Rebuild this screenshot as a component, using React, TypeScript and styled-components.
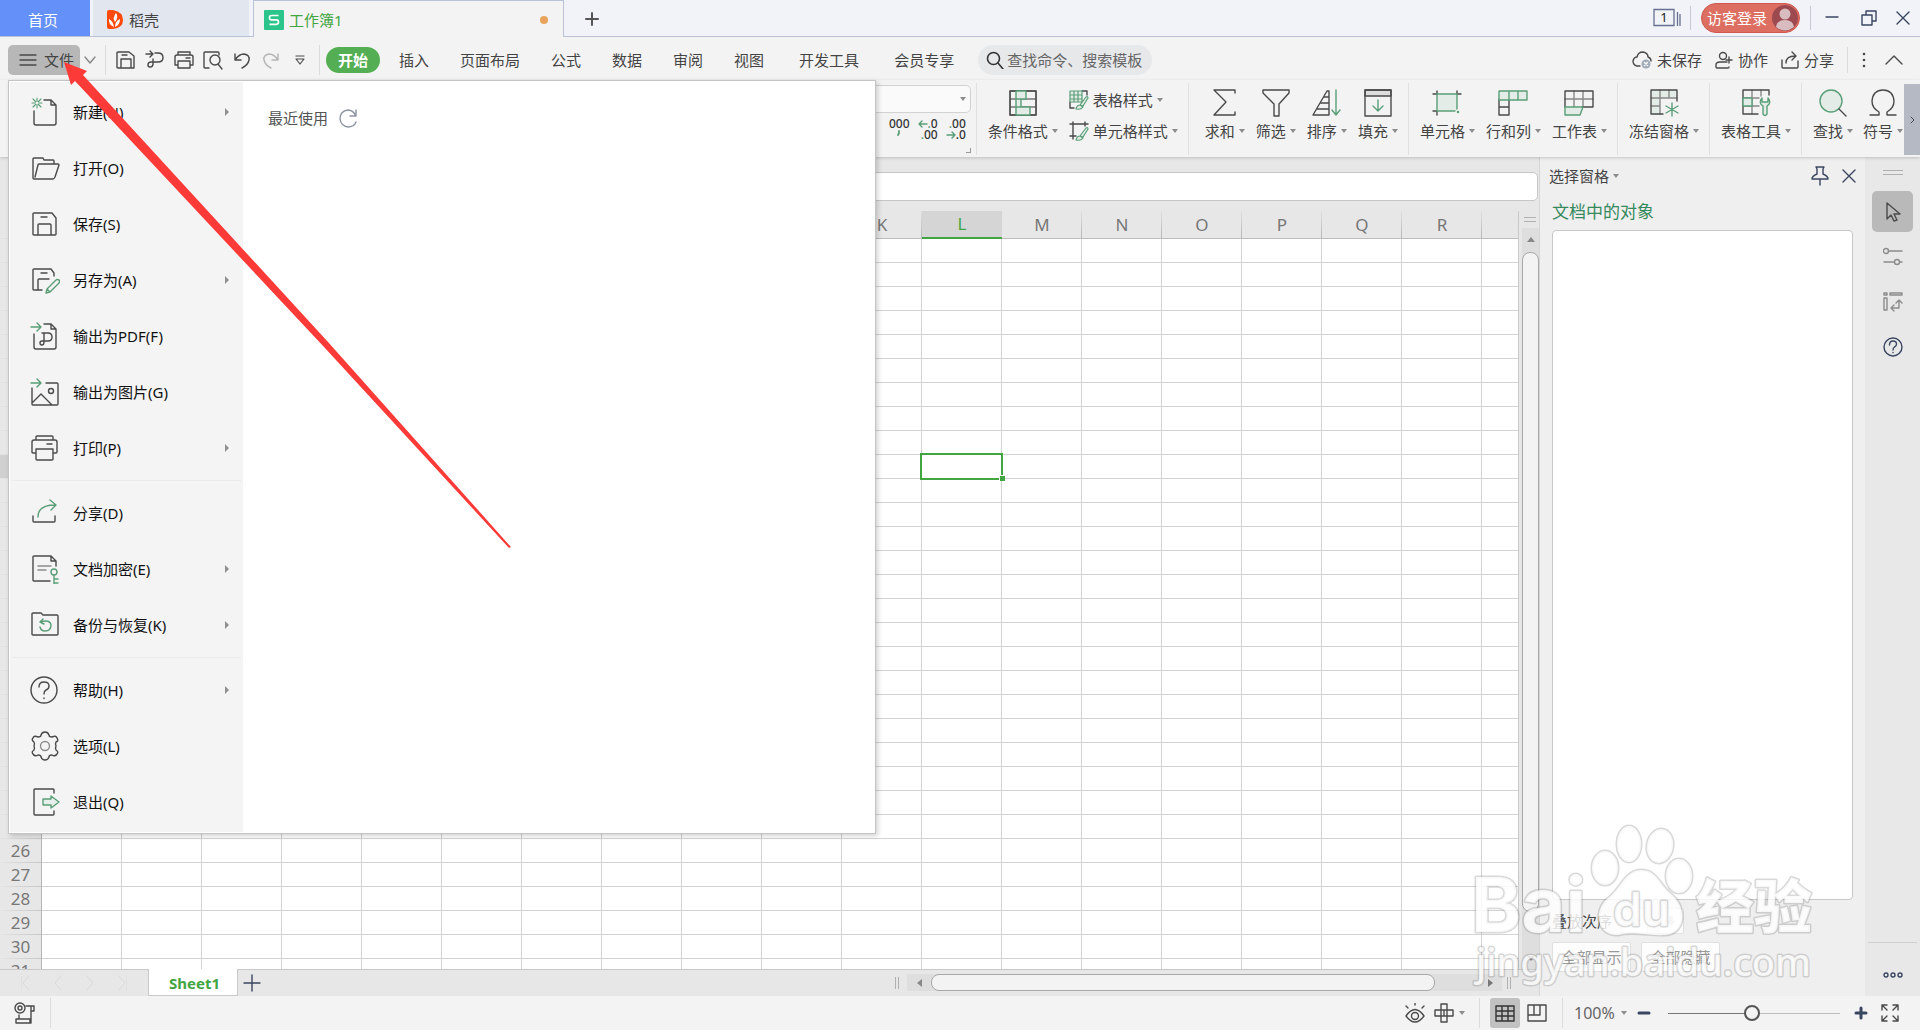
import React from "react";
import styled, { createGlobalStyle, css } from "styled-components";

const INK = "#4a4a4a";
const GREEN = "#5a9e78";
const NAVY = "#3a4560";
const TINT = "#e3ece6";

const Global = createGlobalStyle`
  *, *::before, *::after { box-sizing: border-box; }
  html, body, #root { height: 100%; }
  body {
    margin: 0;
    overflow: hidden;
    font-family: "Noto Sans", "Noto Sans CJK SC", sans-serif;
    font-size: 15px;
    line-height: 20px;
    color: #444;
    background: #f3f3f3;
  }
  button, input, select {
    font: inherit;
    color: inherit;
    background: none;
    border: 0;
    margin: 0;
    padding: 0;
  }
  button { cursor: pointer; white-space: nowrap; }
  svg { display: block; flex: none; }
`;

/* ---------- shared pieces ---------- */

type IconProps = {
  w: number;
  h?: number;
  color?: string;
  sw?: number;
  children: React.ReactNode;
};

const Icon = ({ w, h = w, color = INK, sw = 1.4, children }: IconProps) => (
  <svg
    width={w}
    height={h}
    viewBox={`0 0 ${w} ${h}`}
    fill="none"
    stroke={color}
    strokeWidth={sw}
    strokeLinecap="round"
    strokeLinejoin="round"
    aria-hidden="true"
  >
    {children}
  </svg>
);

const Caret = styled.span`
  flex: none;
  width: 0;
  height: 0;
  border: 3px solid transparent;
  border-top: 4px solid #8c8c8c;
  border-bottom: 0;
`;

const Divider = styled.span<{ $h: number; $color?: string }>`
  flex: none;
  width: 1px;
  height: ${(p) => p.$h}px;
  background: ${(p) => p.$color || "#dcdcdc"};
`;

const IconButton = styled.button<{ $w: number; $h?: number }>`
  flex: none;
  display: flex;
  align-items: center;
  justify-content: center;
  width: ${(p) => p.$w}px;
  height: ${(p) => p.$h || 28}px;
`;

const Window = styled.div`
  position: relative;
  display: flex;
  flex-direction: column;
  height: 100vh;
  overflow: hidden;
`;

/* ---------- title bar ---------- */

const TitleBar = styled.header`
  flex: none;
  display: flex;
  height: 37px;
  background: linear-gradient(#b9c2d6, #b9c2d6) bottom / 100% 1px no-repeat #f1f3f8;
`;

const DocTab = styled.button<{ $kind: "home" | "plain" | "active" }>`
  display: flex;
  align-items: center;
  gap: 6px;
  padding: 3px 12px 0 14px;
  ${(p) =>
    p.$kind === "home" &&
    css`
      width: 90px;
      height: 36px;
      justify-content: center;
      padding: 3px 4px 0 0;
      color: #fff;
      background: #6490fa;
    `}
  ${(p) =>
    p.$kind === "plain" &&
    css`
      width: 156px;
      height: 36px;
      margin: 0 4px 0 3px;
      background: #e1e6ef;
    `}
  ${(p) =>
    p.$kind === "active" &&
    css`
      gap: 5px;
      width: 311px;
      height: 37px;
      padding: 2px 12px 0 10px;
      color: #41a541;
      background: #f3f3f3;
      border: 1px solid #b9c2d6;
      border-bottom: 0;
    `}
`;

const Unsaved = styled.i`
  width: 8px;
  height: 8px;
  margin: 0 3px 0 auto;
  border-radius: 50%;
  background: #e8a35c;
`;

const TitleTools = styled.div`
  display: flex;
  align-items: center;
  margin-left: auto;
  height: 36px;
`;

const Login = styled.button`
  display: flex;
  align-items: center;
  gap: 5px;
  width: 99px;
  height: 30px;
  margin: 0 10px;
  padding-left: 5px;
  border: 1px solid #cf5850;
  border-radius: 15px;
  color: #fff;
  background: #dc6e62;
`;

/* ---------- menu bar ---------- */

const MenuBar = styled.nav`
  flex: none;
  display: flex;
  align-items: center;
  height: 43px;
  padding: 3px 12px 0 8px;
`;

const FileButton = styled.button`
  display: flex;
  align-items: center;
  gap: 7px;
  width: 72px;
  height: 30px;
  margin-right: 1px;
  padding-left: 11px;
  border-radius: 5px;
  background: #b7b7b7;
`;

const QuickTools = styled.div`
  display: flex;
  margin: 0 5px;
`;

const QuickStart = styled(Divider)`
  margin-left: 6px;
`;

const RibbonTabs = styled.div`
  display: flex;
  gap: 7px;
  margin-left: 6px;
`;

const RibbonTab = styled.button<{ $active?: boolean; $member?: boolean }>`
  height: 26px;
  padding: 0 12px;
  border-radius: 13px;
  margin-left: ${(p) => (p.$member ? 4 : 0)}px;
  ${(p) =>
    p.$active &&
    css`
      font-weight: 700;
      color: #fff;
      background: #54ae54;
    `}
`;

const Search = styled.label`
  display: flex;
  align-items: center;
  gap: 3px;
  width: 174px;
  height: 30px;
  margin-left: 12px;
  padding-left: 8px;
  border-radius: 15px;
  background: #e6e8ea;
  input {
    width: 140px;
    outline: 0;
  }
  input::placeholder {
    color: #666;
    opacity: 1;
  }
`;

const ShareTools = styled.div`
  display: flex;
  align-items: center;
  gap: 13px;
  margin-left: auto;
`;

const ShareButton = styled.button`
  display: flex;
  align-items: center;
  gap: 5px;
`;

/* ---------- ribbon ---------- */

const Ribbon = styled.div`
  position: relative;
  flex: none;
  display: flex;
  height: 77px;
  background: #f3f3f3;
  box-shadow: 0 1px 3px rgba(0, 0, 0, 0.18);
  z-index: 1;
`;

const Group = styled.div<{ $wide?: boolean; $last?: boolean }>`
  flex: none;
  display: flex;
  align-items: flex-start;
  gap: ${(p) => (p.$last ? 10 : 11)}px;
  height: 72px;
  margin-top: 3px;
  padding: 5px ${(p) => (p.$last ? 1 : 10)}px 0 ${(p) => (p.$wide ? 16 : 11)}px;
  border-left: 1px solid #e0e0e0;
`;

const NumberGroup = styled.div`
  flex: 1;
  min-width: 0;
  display: flex;
  flex-direction: column;
  align-items: flex-end;
  padding: 5px 5px 0 0;
`;

const FormatSelect = styled.div`
  position: relative;
  display: flex;
  width: 180px;
  height: 28px;
  select {
    appearance: none;
    width: 100%;
    border: 1px solid #d2d2d2;
    border-radius: 5px;
    background: #fafafa;
  }
  ${Caret} {
    position: absolute;
    right: 5px;
    top: 12px;
  }
`;

const NumberTools = styled.div`
  display: flex;
  gap: 8px;
  margin-top: 5px;
  padding-right: 5px;
`;

const NumberButton = styled.button`
  display: flex;
  flex-direction: column;
  align-items: flex-end;
  font-family: "Noto Sans", sans-serif;
  font-size: 12px;
  font-weight: 500;
  line-height: 11px;
  color: #333;
  em {
    font-style: normal;
    color: ${GREEN};
  }
  &:first-child { align-items: center; }
  span {
    display: flex;
    align-items: center;
  }
`;

const Corner = styled.i`
  width: 5px;
  height: 5px;
  margin-top: 8px;
  border: solid #999;
  border-width: 0 1px 1px 0;
`;

const BigButton = styled.button`
  display: flex;
  flex-direction: column;
  align-items: center;
  gap: 4px;
  padding-top: 1px;
`;

const Labelled = styled.span`
  display: flex;
  align-items: center;
  gap: 4px;
`;

const StyleStack = styled.div`
  display: flex;
  flex-direction: column;
  gap: 11px;
  margin-top: 2px;
`;

const StyleButton = styled.button`
  display: flex;
  align-items: center;
  gap: 4px;
`;

const Overflow = styled.button`
  flex: none;
  width: 16px;
  height: 71px;
  margin-top: 4px;
  color: #555;
  background: #b5b9c3;
  display: flex;
  align-items: center;
  justify-content: center;
`;

const Tool = ({ label, children }: { label: string; children: React.ReactNode }) => (
  <BigButton type="button">
    <Icon w={30} h={28}>{children}</Icon>
    <Labelled>
      {label}
      <Caret />
    </Labelled>
  </BigButton>
);

/* ---------- work area ---------- */

const Body = styled.div`
  flex: 1;
  min-height: 0;
  display: flex;
`;

const Main = styled.main`
  flex: 1;
  min-width: 0;
  display: flex;
  flex-direction: column;
  background: #e7e7e7;
`;

const FormulaBar = styled.div`
  flex: none;
  display: flex;
  padding: 15px 1px 10px 280px;
  input {
    flex: 1;
    height: 29px;
    border: 1px solid #c6c6c6;
    border-radius: 5px;
    background: #fff;
  }
`;

const SheetArea = styled.div`
  flex: 1;
  min-height: 0;
  display: flex;
`;

const GridView = styled.div`
  flex: 1;
  min-width: 0;
  overflow: hidden;
  border-right: 1px solid #c9c9c9;
`;

const Grid = styled.table`
  table-layout: fixed;
  width: 1562px;
  border-collapse: separate;
  border-spacing: 0;
  font-size: 17px;
  line-height: 22px;
  color: #777;
  th {
    padding: 0;
    font-weight: 400;
  }
  td {
    padding: 0;
    height: 24px;
    background: #fff;
    border: solid #d3d3d3;
    border-width: 0 1px 1px 0;
  }
`;

const ColHead = styled.th<{ $on?: boolean }>`
  width: 80px;
  height: 28px;
  border-bottom: 1px solid #bdbdbd;
  background: linear-gradient(#e0e0e0, #b5b5b5) right / 1px 100% no-repeat #e7e7e7;
  ${(p) =>
    p.$on &&
    css`
      color: #41a541;
      background: #d5d5d5;
      border-bottom: 2px solid #41a541;
    `}
`;

const RowHead = styled.th<{ $on?: boolean }>`
  width: 42px;
  height: 24px;
  border-right: 1px solid #b5b5b5;
  background: linear-gradient(90deg, #e4e4e4, #c6c6c6) bottom / 100% 1px no-repeat
    ${(p) => (p.$on ? "#d0d0d0" : "#e7e7e7")};
`;

const ActiveCell = styled.td`
  position: relative;
  &::before {
    content: "";
    position: absolute;
    inset: -2px;
    border: 2px solid #41a541;
  }
  &::after {
    content: "";
    position: absolute;
    right: -4px;
    bottom: -3px;
    width: 6px;
    height: 6px;
    background: #41a541;
    border: solid #fff;
    border-width: 1px 0 0 1px;
  }
`;

const VScroll = styled.div`
  flex: none;
  display: flex;
  flex-direction: column;
  width: 20px;
  padding-left: 3px;
`;

const Grip = styled.i<{ $w: number; $h: number; $m?: string }>`
  flex: none;
  width: ${(p) => p.$w}px;
  height: ${(p) => p.$h}px;
  margin: ${(p) => p.$m || 0};
  border: solid #b0b0b0;
  border-width: ${(p) => (p.$w > p.$h ? "1px 0" : "0 1px")};
`;

const Track = styled.div`
  flex: 1;
  display: flex;
  flex-direction: column;
  background: #dedede;
`;

const VThumb = styled.div`
  flex: 95;
  margin-top: 2px;
  border: 1px solid #a8a8a8;
  border-radius: 8px;
  background: #f3f3f3;
`;

const Rest = styled.div`
  flex: 5;
`;

const SheetBar = styled.div`
  flex: none;
  display: flex;
  align-items: center;
  height: 27px;
  padding-right: 28px;
  background: linear-gradient(#c9c9c9, #c9c9c9) top / 100% 1px no-repeat #e7e7e7;
`;

const SheetNav = styled.div`
  display: flex;
  gap: 8px;
  width: 148px;
  padding-left: 14px;
`;

const SheetTab = styled.button`
  align-self: stretch;
  width: 90px;
  padding: 2px 0 0 3px;
  font-weight: 700;
  color: #41a541;
  background: #fff;
  border: solid #c9c9c9;
  border-width: 0 1px 1px 1px;
`;

const HScroll = styled.div`
  display: flex;
  align-items: center;
  width: 595px;
  height: 17px;
  margin: 0 5px 0 8px;
  background: #dedede;
`;

const HThumb = styled.div`
  flex: 1;
  height: 17px;
  border: 1px solid #a8a8a8;
  border-radius: 8px;
  background: #f3f3f3;
`;

const HRest = styled.div`
  width: 43px;
`;

/* ---------- selection pane ---------- */

const Pane = styled.aside`
  flex: none;
  display: flex;
  flex-direction: column;
  width: 326px;
  padding: 9px 12px 24px;
  border-left: 1px solid #d6d6d6;
  background: #efefef;
`;

const PaneHead = styled.div`
  display: flex;
  align-items: center;
  height: 20px;
  margin: 0 -10px 0 -3px;
  ${Labelled} { margin-right: auto; }
`;

const PaneTitle = styled.h2`
  margin: 14px 0 6px;
  font-size: 17px;
  line-height: 24px;
  font-weight: 400;
  color: #35895c;
`;

const ObjectList = styled.div`
  flex: 1;
  border: 1px solid #c8c8c8;
  border-radius: 4px;
  background: #fff;
`;

const PaneRow = styled.div`
  display: flex;
  align-items: center;
  gap: 10px;
  margin-top: 8px;
`;

const PaneButton = styled.button<{ $w: number; $h: number }>`
  display: flex;
  align-items: center;
  justify-content: center;
  width: ${(p) => p.$w}px;
  height: ${(p) => p.$h}px;
  color: #9a9a9a;
  background: #fdfdfd;
  border: 1px solid #e0e0e0;
  border-radius: 2px;
`;

const SideBar = styled.div`
  flex: none;
  display: flex;
  flex-direction: column;
  align-items: center;
  width: 55px;
  background: #e8e8e8;
`;

const SideButton = styled.button<{ $on?: boolean }>`
  display: flex;
  align-items: center;
  justify-content: center;
  width: 41px;
  height: 41px;
  margin-bottom: 4px;
  border-radius: 5px;
  background: ${(p) => (p.$on ? "#b9b9b9" : "none")};
`;

const SideMore = styled.div`
  display: flex;
  align-items: center;
  justify-content: center;
  width: 49px;
  height: 54px;
  margin-top: auto;
  padding-top: 10px;
  border-top: 1px solid #d0d0d0;
`;

/* ---------- status bar ---------- */

const StatusBar = styled.footer`
  flex: none;
  display: flex;
  align-items: center;
  gap: 14px;
  height: 34px;
  padding: 0 12px 0 14px;
  background: #f3f3f3;
`;

const StatusTools = styled.div`
  display: flex;
  align-items: center;
  margin-left: auto;
`;

const ViewGroup = styled.div`
  display: flex;
  gap: 2px;
  margin-left: 14px;
  padding: 0 10px;
  border: solid #dcdcdc;
  border-width: 0 1px;
`;

const ViewButton = styled.button<{ $on?: boolean }>`
  display: flex;
  align-items: center;
  justify-content: center;
  width: 30px;
  height: 30px;
  border-radius: 3px;
  background: ${(p) => (p.$on ? "#c1c1c1" : "none")};
`;

const Zoom = styled.button`
  display: flex;
  align-items: center;
  gap: 6px;
  width: 67px;
  padding-left: 11px;
  font-size: 16px;
  color: #666;
`;

const Slider = styled.input`
  appearance: none;
  width: 172px;
  height: 18px;
  margin: 0 10px;
  background: linear-gradient(90deg, #777 50%, #bbb 50%) center / 100% 1px no-repeat;
  &::-webkit-slider-thumb {
    appearance: none;
    width: 16px;
    height: 16px;
    border: 2px solid #555;
    border-radius: 50%;
    background: #f3f3f3;
  }
`;

/* ---------- file menu ---------- */

const FileMenu = styled.section`
  position: absolute;
  z-index: 2;
  left: 8px;
  top: 80px;
  display: flex;
  width: 868px;
  padding: 1px;
  border: 1px solid #c4c4c4;
  background: #fff;
  box-shadow: 2px 2px 5px rgba(0, 0, 0, 0.18);
`;

const Commands = styled.div`
  width: 233px;
  padding: 2px 0;
  background: #f4f4f4;
`;

const Command = styled.button`
  display: flex;
  align-items: center;
  gap: 13px;
  width: 100%;
  height: 56px;
  padding: 0 14px 0 20px;
  color: #111;
`;

const SubArrow = styled.i`
  margin-left: auto;
  border: 4px solid transparent;
  border-left-color: #8f8f8f;
  border-right: 0;
`;

const CommandRule = styled.hr`
  height: 1px;
  margin: 4px 2px;
  border: 0;
  background: #ebebeb;
`;

const Recent = styled.div`
  display: flex;
  align-items: center;
  gap: 11px;
  height: 20px;
  margin: 26px 0 0 25px;
  color: #555;
`;

/* ---------- overlays ---------- */

const Arrow = styled.svg`
  position: absolute;
  z-index: 3;
  left: 60px;
  top: 60px;
  pointer-events: none;
`;

const Watermark = styled.svg`
  position: absolute;
  z-index: 3;
  right: 90px;
  bottom: 36px;
  pointer-events: none;
  fill: rgba(255, 255, 255, 0.82);
  stroke: rgba(120, 120, 120, 0.28);
  stroke-width: 3px;
  stroke-linejoin: round;
  paint-order: stroke;
`;

/* ---------- menu data ---------- */

type Item = { label: string; sub?: boolean; art: React.ReactNode };

const groups: Item[][] = [
  [
    {
      label: "新建(N)",
      sub: true,
      art: (
        <>
          <path d="M14 3h7l5 5v18q0 2-2 2H6q-2 0-2-2V14M21 3v5h5" />
          <path d="M7 1v10M2 6h10M3 2l8 8M11 2l-8 8" stroke={GREEN} strokeWidth="1.1" />
          <circle cx="7" cy="6" r="1.5" fill="#f4f4f4" stroke="none" />
        </>
      ),
    },
    {
      label: "打开(O)",
      art: (
        <path d="M24 11V8q0-1-1-1H14l-1-2H4Q3 5 3 6v19q0 1 1 1h19q1 0 2-2l4-12q0-1-1-1H9q-1 0-1 1L5 24" />
      ),
    },
    {
      label: "保存(S)",
      art: <path d="M4 4h18l4 5v16q0 1-1 1H4q-1 0-1-1V5q0-1 1-1zM8 26V16q0-1 1-1h11q1 0 1 1v10M11 8h6" />,
    },
    {
      label: "另存为(A)",
      sub: true,
      art: (
        <>
          <path d="M12 25H4q-1 0-1-1V5q0-1 1-1h17l3 4v3M8 25V15q0-1 1-1h10M11 8h6" />
          <path d="M16 28l1-4L26 15q1-1 3 0 1 1 0 3l-9 9zM17 24l3 3" stroke={GREEN} />
        </>
      ),
    },
    {
      label: "输出为PDF(F)",
      art: (
        <>
          <path d="M14 3h7l5 5v18q0 2-2 2H6q-2 0-2-2V13M21 3v5h5" />
          <path d="M12 12h6q4 0 4 4t-4 4h-6q-2 0-2 2t2 2 2-3v-9" />
          <path d="M1 6h10M7 2l4 4-4 4" stroke={GREEN} />
        </>
      ),
    },
    {
      label: "输出为图片(G)",
      art: (
        <>
          <path d="M16 6h11q1 0 1 1v20q0 1-1 1H3q-1 0-1-1V11M2 26l9-9 11 11" />
          <circle cx="21" cy="14" r="2.5" />
          <path d="M1 6h10M7 2l4 4-4 4" stroke={GREEN} />
        </>
      ),
    },
    {
      label: "打印(P)",
      sub: true,
      art: (
        <path d="M6 7V4q0-1 1-1h15q1 0 1 1v3M6 20H3q-1 0-1-1V9q0-2 2-2h21q2 0 2 2v10q0 1-1 1h-3M17 11h5M6 16h17v10q0 1-1 1H7q-1 0-1-1z" />
      ),
    },
  ],
  [
    {
      label: "分享(D)",
      art: (
        <>
          <path d="M3 18v5q0 1 1 1h20q1 0 1-1v-5" />
          <path d="M8 19q0-12 17-12M20 2l6 5-5 5" stroke={GREEN} />
        </>
      ),
    },
    {
      label: "文档加密(E)",
      sub: true,
      art: (
        <>
          <path d="M20 27H4q-1 0-1-1V3q0-1 1-1h17l5 5v5M21 2v5h5" />
          <path d="M8 12h13M8 16h8" stroke="#8c8c8c" />
          <path d="M24 21v9M24 25h4M24 29h4" stroke={GREEN} />
          <circle cx="24" cy="18" r="3" stroke={GREEN} />
        </>
      ),
    },
    {
      label: "备份与恢复(K)",
      sub: true,
      art: (
        <>
          <path d="M3 3h8l2 2h14q1 0 1 1v18q0 1-1 1H3q-1 0-1-1V4q0-1 1-1z" />
          <path d="M13 9l-3 3 4 2M10 12q10-3 11 3 0 6-6 6-4 0-5-4" stroke={GREEN} />
        </>
      ),
    },
  ],
  [
    {
      label: "帮助(H)",
      sub: true,
      art: (
        <>
          <circle cx="14" cy="15" r="13" />
          <path d="M9 12q0-5 5-5t5 4q0 3-3 4-2 1-2 4M14 23v.5" />
        </>
      ),
    },
    {
      label: "选项(L)",
      art: (
        <>
          <path d="M11 4q1-3 4-3t4 3q0 2 3 2 4-2 5 1 2 3-1 4-1 2 0 4-1 2 0 4 3 2 1 4-2 3-5 1-3 0-3 2-1 3-4 3t-4-3q0-2-3-2-3 2-5-1-2-2 1-4 1-2 0-4 1-2 0-4-3-2-1-4 1-3 5-1 3 0 3-2z" />
          <circle cx="15" cy="15" r="4.5" stroke="#8c8c8c" />
        </>
      ),
    },
    {
      label: "退出(Q)",
      art: (
        <>
          <path d="M24 6V3q0-1-1-1H5Q4 2 4 3v24q0 1 1 1h18q1 0 1-1v-3" />
          <path d="M13 12h8V9l8 6-8 6v-3h-8z" stroke={GREEN} fill="#e6efe9" />
        </>
      ),
    },
  ],
];

const columns = "ABCDEFGHIJKLMNOPQRS".split("");
const rows = Array.from({ length: 31 }, (_, i) => i + 1);
const ribbonTabs = ["开始", "插入", "页面布局", "公式", "数据", "审阅", "视图", "开发工具", "会员专享"];
const navArt = ["M8 1L2 8l6 7M0 1v14", "M8 1L2 8l6 7", "M2 1l6 7-6 7", "M2 1l6 7-6 7M10 1v14"];

export default function App() {
  return (
    <Window>
      <Global />
      <TitleBar>
        <DocTab type="button" $kind="home">首页</DocTab>
        <DocTab type="button" $kind="plain">
          <svg width="16" height="20" viewBox="0 0 16 20" aria-hidden="true">
            <path d="M2 0h4q10 2 10 10t-10 9H2q-2 0-2-2V2q0-2 2-2z" fill="#ff4a0d" />
            <path d="M7 17Q1 14 2 9q4 2 5 8zM8 12q-3-4 1-9 3 4-1 9zM8 17q0-6 5-8 0 6-5 8z" fill="#fff" />
          </svg>
          稻壳
        </DocTab>
        <DocTab type="button" $kind="active">
          <svg width="20" height="20" viewBox="0 0 20 20" aria-hidden="true">
            <rect width="20" height="20" rx="1" fill="#2bc48a" />
            <path d="M14.5 5.5H7.500q-2 0-2 2.200t2 2.200h5q2 0 2 2.200t-2 2.200h-7" fill="none" stroke="#fff" strokeWidth="1.7" />
          </svg>
          工作簿1
          <Unsaved />
        </DocTab>
        <IconButton type="button" $w={55} $h={38} aria-label="新建标签">
          <Icon w={16} color="#555" sw={2}><path d="M8 2v12M2 8h12" /></Icon>
        </IconButton>
        <TitleTools>
          <IconButton type="button" $w={46} aria-label="窗口">
            <svg width="28" height="20" viewBox="0 0 28 20" aria-hidden="true">
              <path d="M1 1.5h20v16H1zM24.5 4v14M27 6v12" fill="none" stroke="#66728f" strokeWidth="1.3" />
              <text x="11" y="14" textAnchor="middle" fontSize="13" fill="#222">1</text>
            </svg>
          </IconButton>
          <Divider $h={24} $color="#c5c9d3" />
          <Login type="button">
            访客登录
            <svg width="26" height="26" viewBox="0 0 26 26" aria-hidden="true">
              <circle cx="13" cy="13" r="13" fill="#9c4a50" />
              <circle cx="13" cy="9" r="5.5" fill="#d9bcbf" />
              <path d="M4 22q1-7 9-7t9 7q-9 7-18 0z" fill="#d9bcbf" />
            </svg>
          </Login>
          <Divider $h={24} $color="#c5c9d3" />
          <IconButton type="button" $w={42} aria-label="最小化">
            <Icon w={16} color={NAVY}><path d="M2 7h12" /></Icon>
          </IconButton>
          <IconButton type="button" $w={32} aria-label="还原">
            <Icon w={16} color={NAVY}><path d="M1 5h10v10H1zM5 5V1h10v10h-4" /></Icon>
          </IconButton>
          <IconButton type="button" $w={35} aria-label="关闭">
            <Icon w={16} color={NAVY}><path d="M2 2l12 12M14 2L2 14" /></Icon>
          </IconButton>
        </TitleTools>
      </TitleBar>

      <MenuBar>
        <FileButton type="button">
          <Icon w={18} h={14}><path d="M1 2h16M1 7h16M1 12h16" /></Icon>
          文件
        </FileButton>
        <IconButton type="button" $w={18} aria-label="更多">
          <Icon w={12} h={8} color="#888"><path d="M1 1l5 6 5-6" /></Icon>
        </IconButton>
        <QuickStart $h={30} />
        <QuickTools>
          <IconButton type="button" $w={29} aria-label="保存">
            <Icon w={20}><path d="M2 2h11l5 4v12H2q-1 0-1-1V3q0-1 1-1zM5 18V9h10v9M6 5h5" /></Icon>
          </IconButton>
          <IconButton type="button" $w={29} aria-label="输出为PDF">
            <Icon w={20}><path d="M1 4h6M5 1l3 3-3 3M10 3h3q5 0 5 4.500T13 12H6q-3 0-3 3 0 2 2 2 3 0 3-3V9" /></Icon>
          </IconButton>
          <IconButton type="button" $w={29} aria-label="打印">
            <Icon w={20}><path d="M4 5V2h12v3M4 15H1V7q0-2 2-2h14q2 0 2 2v8h-3M12 8h4M4 11h12v7H4z" /></Icon>
          </IconButton>
          <IconButton type="button" $w={29} aria-label="打印预览">
            <Icon w={20}><path d="M6 18H2q-1 0-1-1V3q0-1 1-1h13q1 0 1 1v2M15 14l4 5" /><circle cx="12" cy="10" r="5" /></Icon>
          </IconButton>
          <IconButton type="button" $w={29} aria-label="撤销">
            <Icon w={18}><path d="M2 3v6h6M2 9q4-6 9-6 6 1 5 6-1 5-7 8" /></Icon>
          </IconButton>
          <IconButton type="button" $w={29} aria-label="恢复">
            <Icon w={18} color="#b5b5b5"><path d="M16 3v6h-6M16 9q-4-6-9-6Q1 4 2 9q1 5 7 8" /></Icon>
          </IconButton>
          <IconButton type="button" $w={29} aria-label="自定义">
            <Icon w={10} sw={1.2}><path d="M1 1h8M1 4h8L5 9z" /></Icon>
          </IconButton>
        </QuickTools>
        <Divider $h={30} />
        <RibbonTabs>
          {ribbonTabs.map((t, i) => (
            <RibbonTab type="button" key={t} $active={i === 0} $member={i > 6}>{t}</RibbonTab>
          ))}
        </RibbonTabs>
        <Search>
          <Icon w={18} color="#333" sw={1.6}><circle cx="7.5" cy="7.5" r="6" /><path d="M12 12l5 6" /></Icon>
          <input type="text" placeholder="查找命令、搜索模板" aria-label="查找命令、搜索模板" />
        </Search>
        <ShareTools>
          <ShareButton type="button">
            <Icon w={20}>
              <path d="M8 16H5q-4-1-4-5 1-4 4-4 1-5 6-5 5 1 5 5 3 1 3 4" />
              <circle cx="14" cy="14" r="4.5" fill="#a3abba" stroke="none" />
              <path d="M12.5 12.500l3 3M15.500 12.500l-3 3" stroke="#fff" />
            </Icon>
            未保存
          </ShareButton>
          <ShareButton type="button">
            <Icon w={18}><circle cx="8" cy="5" r="3.5" /><path d="M12 11H5q-4 0-4 3v2q0 1 1 1h11q1 0 1-1M14 6v6M11 9h6" /></Icon>
            协作
          </ShareButton>
          <ShareButton type="button">
            <Icon w={18}><path d="M1 9v7q0 1 1 1h14q1 0 1-1v-6M5 12q0-7 9-7M11 1l4 4-4 4" /></Icon>
            分享
          </ShareButton>
          <Divider $h={26} />
          <Icon w={6} h={16}><g fill={INK} stroke="none"><circle cx="3" cy="2" r="1.3" /><circle cx="3" cy="8" r="1.3" /><circle cx="3" cy="14" r="1.3" /></g></Icon>
          <IconButton type="button" $w={28} aria-label="收起功能区">
            <Icon w={18} h={12}><path d="M1 10l8-8 8 8" /></Icon>
          </IconButton>
        </ShareTools>
      </MenuBar>

      <Ribbon>
        <NumberGroup>
          <FormatSelect>
            <select aria-label="数字格式" />
            <Caret />
          </FormatSelect>
          <NumberTools>
            <NumberButton type="button" aria-label="千位分隔">
              <span>000</span>
              <Icon w={4} h={8} color={GREEN} sw={1.8}><path d="M2 2v2l-1 2" /></Icon>
            </NumberButton>
            <NumberButton type="button" aria-label="增加小数">
              <span><Icon w={10} h={8} color={GREEN}><path d="M9 4H1M4 1L1 4l3 3" /></Icon><em>.</em>0</span>
              <span><em>.</em>00</span>
            </NumberButton>
            <NumberButton type="button" aria-label="减少小数">
              <span><em>.</em>00</span>
              <span><Icon w={10} h={8} color={GREEN}><path d="M1 4h8M6 1l3 3-3 3" /></Icon>.0</span>
            </NumberButton>
          </NumberTools>
          <Corner />
        </NumberGroup>
        <Group>
          <Tool label="条件格式">
            <path d="M2 2h26v24H2zM2 10h26M2 18h26" stroke="#777" />
            <path d="M2 2h26v24H2z" />
            <path d="M8 2h10v8h-5v8h9v8H8zM8 10h5M8 18h5" stroke={GREEN} fill={TINT} />
          </Tool>
          <StyleStack>
            <StyleButton type="button">
              <Icon w={20}>
                <path d="M1 12v6h4M13 1h5v4" />
                <path d="M1 1h12v11H1zM5 1v11M9 1v11M1 5h12M1 9h12M11 15l6-8q2-1 2 1l-5 8zM11 15q-3 0-4 4 5 1 7-2z" stroke={GREEN} fill={TINT} strokeWidth="1.2" />
              </Icon>
              <Labelled>表格样式<Caret /></Labelled>
            </StyleButton>
            <StyleButton type="button">
              <Icon w={20}>
                <path d="M1 3h18M4 1v17M1 15h6M16 1v4" />
                <path d="M11 15l6-8q2-1 2 1l-5 8zM11 15q-3 0-4 4 5 1 7-2z" stroke={GREEN} fill={TINT} strokeWidth="1.2" />
              </Icon>
              <Labelled>单元格样式<Caret /></Labelled>
            </StyleButton>
          </StyleStack>
        </Group>
        <Group $wide>
          <Tool label="求和"><path d="M25 4V1H4l12 12L4 26h21v-3" /></Tool>
          <Tool label="筛选"><path d="M2 1h26v3L18 15v12h-5V15L2 4z" /></Tool>
          <Tool label="排序">
            <path d="M1 26L15 2h2v24zM5 20h12M8 14h9M12 8h5" />
            <path d="M24 1v25M20 21l4 5 4-5" stroke={GREEN} />
          </Tool>
          <Tool label="填充">
            <path d="M2 1h26v6H2z" fill="#ddd" />
            <path d="M2 1h26v26H2z" />
            <path d="M15 11v11M10 17l5 5 5-5" stroke={GREEN} />
          </Tool>
        </Group>
        <Group>
          <Tool label="单元格">
            <path d="M1 5h4M5 2v3M25 2v3M25 5h4M1 22h4M5 22v4" />
            <path d="M5 5h20v17H5z" stroke={GREEN} fill={TINT} />
            <circle cx="26" cy="23" r="2" fill={GREEN} stroke="#f3f3f3" />
          </Tool>
          <Tool label="行和列">
            <path d="M1 10h10v16H1zM1 18h10" />
            <path d="M1 2h28v9H1zM11 2v9M20 2v9" stroke={GREEN} fill={TINT} />
          </Tool>
          <Tool label="工作表">
            <path d="M10 2v16M19 2v16M1 10h28" stroke="#888" />
            <path d="M1 18V2h28v16H18" />
            <path d="M1 18h18l-3 8H1z" stroke={GREEN} fill={TINT} />
          </Tool>
        </Group>
        <Group>
          <Tool label="冻结窗格">
            <path d="M2 1h26v8H11v16H2z" fill={TINT} stroke="none" />
            <path d="M11 1v24M20 1v8M2 9h26M2 17h9" stroke="#888" />
            <path d="M14 25H2V1h26v11" />
            <path d="M23 14v13M17 17l12 7M29 17l-12 7" stroke={GREEN} />
          </Tool>
        </Group>
        <Group>
          <Tool label="表格工具">
            <path d="M11 1v24M20 1v6M2 9h16M2 17h16" stroke="#888" />
            <path d="M17 25H2V1h26v5" />
            <path d="M2 9h9v8H2z" stroke={GREEN} fill={TINT} />
            <path d="M21 9q-4 5 1 8v8q2 3 4 0v-8q5-3 1-8v4h-6z" stroke={GREEN} fill={TINT} />
          </Tool>
        </Group>
        <Group $last>
          <Tool label="查找">
            <circle cx="13" cy="12" r="11" stroke={GREEN} fill={TINT} />
            <path d="M21 20l7 7" />
          </Tool>
          <Tool label="符号">
            <path d="M2 26h9v-3q-7-4-7-11Q5 1 15 1t11 11q0 7-7 11v3h9" />
          </Tool>
        </Group>
        <Overflow type="button" aria-label="更多功能">
          <Icon w={5} h={8} sw={1}><path d="M1 1l3 3-3 3" /></Icon>
        </Overflow>
      </Ribbon>

      <Body>
        <Main>
          <FormulaBar><input type="text" aria-label="编辑栏" /></FormulaBar>
          <SheetArea>
            <GridView>
              <Grid>
                <thead>
                  <tr>
                    <RowHead />
                    {columns.map((c) => <ColHead key={c} $on={c === "L"}>{c}</ColHead>)}
                  </tr>
                </thead>
                <tbody>
                  {rows.map((r) => (
                    <tr key={r}>
                      <RowHead $on={r === 10}>{r}</RowHead>
                      {columns.map((c) => (c === "L" && r === 10 ? <ActiveCell key={c} /> : <td key={c} />))}
                    </tr>
                  ))}
                </tbody>
              </Grid>
            </GridView>
            <VScroll>
              <Grip $w={12} $h={5} $m="6px 0 6px 2px" />
              <Track>
                <IconButton type="button" $w={17} $h={22} aria-label="向上">
                  <Icon w={8} h={5}><path d="M0 5l4-5 4 5z" fill="#888" stroke="none" /></Icon>
                </IconButton>
                <VThumb />
                <Rest />
                <IconButton type="button" $w={17} $h={22} aria-label="向下">
                  <Icon w={8} h={5}><path d="M0 0l4 5 4-5z" fill="#888" stroke="none" /></Icon>
                </IconButton>
              </Track>
            </VScroll>
          </SheetArea>
          <SheetBar>
            <SheetNav>
              {navArt.map((d) => (
                <IconButton type="button" key={d} $w={24} $h={20} aria-label="切换工作表">
                  <Icon w={10} h={16} color="#dadada" sw={1}><path d={d} /></Icon>
                </IconButton>
              ))}
            </SheetNav>
            <SheetTab type="button">Sheet1</SheetTab>
            <IconButton type="button" $w={28} aria-label="新建工作表">
              <Icon w={18} color={NAVY} sw={1.4}><path d="M9 1v16M1 9h16" /></Icon>
            </IconButton>
            <Grip $w={4} $h={12} $m="0 0 0 auto" />
            <HScroll>
              <IconButton type="button" $w={24} $h={17} aria-label="向左">
                <Icon w={5} h={8}><path d="M5 0L0 4l5 4z" fill="#888" stroke="none" /></Icon>
              </IconButton>
              <HThumb />
              <HRest />
              <IconButton type="button" $w={24} $h={17} aria-label="向右">
                <Icon w={5} h={8}><path d="M0 0l5 4-5 4z" fill="#777" stroke="none" /></Icon>
              </IconButton>
            </HScroll>
            <Grip $w={4} $h={12} />
          </SheetBar>
        </Main>

        <Pane>
          <PaneHead>
            <Labelled>选择窗格<Caret /></Labelled>
            <IconButton type="button" $w={30} aria-label="固定">
              <Icon w={18} h={20} color={NAVY}><path d="M5 1h8l-1 2v5q5 2 5 5H1q0-3 5-5V3zM9 13v6" /></Icon>
            </IconButton>
            <IconButton type="button" $w={28} aria-label="关闭窗格">
              <Icon w={16} color={NAVY}><path d="M2 2l12 12M14 2L2 14" /></Icon>
            </IconButton>
          </PaneHead>
          <PaneTitle>文档中的对象</PaneTitle>
          <ObjectList />
          <PaneRow>
            叠放次序
            <PaneButton type="button" $w={26} $h={26} aria-label="上移">
              <Icon w={12}><path d="M6 1l5 5H8v5H4V6H1z" fill="#999" stroke="none" /></Icon>
            </PaneButton>
            <PaneButton type="button" $w={26} $h={26} aria-label="下移">
              <Icon w={12}><path d="M6 11L1 6h3V1h4v5h3z" fill="#ccc" stroke="none" /></Icon>
            </PaneButton>
          </PaneRow>
          <PaneRow>
            <PaneButton type="button" $w={79} $h={30}>全部显示</PaneButton>
            <PaneButton type="button" $w={79} $h={30}>全部隐藏</PaneButton>
          </PaneRow>
        </Pane>

        <SideBar>
          <Grip $w={20} $h={5} $m="13px 0 16px" />
          <SideButton type="button" $on aria-label="选择">
            <Icon w={18} h={20}><path d="M3 1v16l4-4 3 6 3-1-3-6h6z" /></Icon>
          </SideButton>
          <SideButton type="button" aria-label="属性">
            <Icon w={20} color="#8c8c8c"><circle cx="3" cy="4" r="2.5" /><circle cx="14" cy="15" r="2.5" /><path d="M6 4h13M1 15h10M17 15h2" /></Icon>
          </SideButton>
          <SideButton type="button" aria-label="分析">
            <Icon w={20} color="#8c8c8c"><path d="M1 1h3v2H1zM7 1h12v2H7zM1 6h3v12H1zM8 16h8V8M11 13l-3 3 3 3M13 11l3-3 3 3" /></Icon>
          </SideButton>
          <SideButton type="button" aria-label="帮助">
            <Icon w={20} color={NAVY}><circle cx="10" cy="10" r="9" /><path d="M6.5 8q0-4 3.500-4t3.500 3q0 2-2 3-1.500 1-1.500 3M10 15.500v.2" /></Icon>
          </SideButton>
          <SideMore>
            <Icon w={20} h={6} color={NAVY}><circle cx="3" cy="3" r="2" /><circle cx="10" cy="3" r="2" /><circle cx="17" cy="3" r="2" /></Icon>
          </SideMore>
        </SideBar>
      </Body>

      <StatusBar>
        <Icon w={22}>
          <circle cx="6" cy="6" r="5" /><circle cx="6" cy="6" r="2" />
          <path d="M12 4h5v17M17 4h3v5h-3M5 13v3M2 17h14v4H2z" />
        </Icon>
        <Divider $h={30} />
        <StatusTools>
          <IconButton type="button" $w={28} aria-label="护眼模式">
            <Icon w={20}><path d="M1 13q9-13 18 0-9 12-18 0zM10 0v2M1 3l2 2M19 3l-2 2" /><circle cx="10" cy="13" r="3.5" /></Icon>
          </IconButton>
          <IconButton type="button" $w={30} aria-label="阅读模式">
            <Icon w={20}><path d="M7 1h6v18H7zM1 7h18v6H1zM10 7v6" /></Icon>
          </IconButton>
          <Caret />
          <ViewGroup>
            <ViewButton type="button" $on aria-label="普通视图">
              <Icon w={20} h={18} color="#333"><path d="M1 2h18v15H1zM1 7h18M1 12h18M7 2v15M13 2v15" /></Icon>
            </ViewButton>
            <ViewButton type="button" aria-label="分页预览">
              <Icon w={20} h={18}><path d="M1 1h18v16H1zM7 1v10h6V1M1 11h12v-5M13 6h0" /></Icon>
            </ViewButton>
          </ViewGroup>
          <Zoom type="button">100%<Caret /></Zoom>
          <IconButton type="button" $w={28} aria-label="缩小">
            <Icon w={14} color={NAVY} sw={3}><path d="M2 7h10" /></Icon>
          </IconButton>
          <Slider type="range" min={0} max={100} defaultValue={49} aria-label="缩放" />
          <IconButton type="button" $w={22} aria-label="放大">
            <Icon w={14} color={NAVY} sw={3}><path d="M7 2v10M2 7h10" /></Icon>
          </IconButton>
          <IconButton type="button" $w={36} aria-label="全屏">
            <Icon w={18}><path d="M1 6V1h5M1 1l5 5M12 1h5v5M17 1l-5 5M1 12v5h5M1 17l5-5M12 17h5v-5M17 17l-5-5" /></Icon>
          </IconButton>
        </StatusTools>
      </StatusBar>

      <FileMenu>
        <Commands>
          {groups.map((items, g) => (
            <React.Fragment key={g}>
              {g > 0 && <CommandRule />}
              {items.map((item) => (
                <Command type="button" key={item.label}>
                  <Icon w={30}>{item.art}</Icon>
                  {item.label}
                  {item.sub && <SubArrow />}
                </Command>
              ))}
            </React.Fragment>
          ))}
        </Commands>
        <Recent>
          最近使用
          <Icon w={18} h={20} color="#8c93a3"><path d="M17 2v6h-6M17 8Q14 2 9 2 1 3 1 11q1 7 8 8 6 0 8-5" /></Icon>
        </Recent>
      </FileMenu>

      <Arrow width="454" height="490" viewBox="0 0 454 490" aria-hidden="true">
        <path d="M4 2L27 11 23 15 268 282 451 487 449 488 264 287 15 21 11 25z" fill="#fc3a38" />
      </Arrow>

      <Watermark width="360" height="180" viewBox="0 0 360 180" aria-hidden="true">
        <ellipse cx="135" cy="54" rx="13" ry="17" />
        <ellipse cx="159" cy="30" rx="12" ry="18" />
        <ellipse cx="190" cy="32" rx="13" ry="17" transform="rotate(10 190 32)" />
        <ellipse cx="209" cy="62" rx="13" ry="17" />
        <path d="M171 56c16 0 18 14 30 24 16 12 16 40-6 41-12 1-34-4-46 0-22 2-26-24-12-36 14-10 18-29 34-29z" />
        <text x="1" y="118" fontFamily="Inter, sans-serif" fontWeight="700" fontSize="76">Bai</text>
        <text x="143" y="112" fontFamily="Inter, sans-serif" fontWeight="600" fontSize="46">du</text>
        <text x="226" y="114" fontFamily="Noto Sans CJK SC, sans-serif" fontWeight="900" fontSize="58">经验</text>
        <text x="6" y="162" fontFamily="Noto Sans, sans-serif" fontSize="38" fontWeight="500">jingyan.baidu.com</text>
      </Watermark>
    </Window>
  );
}
